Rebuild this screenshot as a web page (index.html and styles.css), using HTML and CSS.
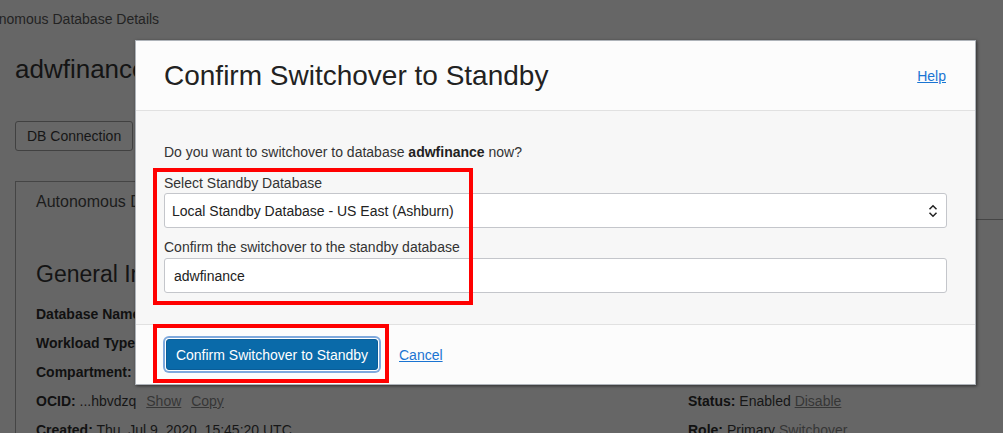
FILE: index.html
```html
<!DOCTYPE html>
<html lang="en">
<head>
<meta charset="utf-8">
<title>Confirm Switchover to Standby</title>
<link rel="stylesheet" href="styles.css">
</head>
<body>
<div class="page">
  <div class="crumb">Autonomous Database Details</div>
  <h1 class="dbname">adwfinance</h1>
  <div class="actions">
    <button class="ghost-btn" type="button">DB Connection</button>
    <button class="ghost-btn" type="button">Service Console</button>
  </div>
  <div class="panel">
    <div class="tabbar">
      <div class="tab">Autonomous Database Information</div>
      <div class="tabfill"></div>
    </div>
    <div class="panel-body">
      <h2 class="section">General Information</h2>
      <div class="cols">
        <div class="col">
          <div class="row"><b>Database Name:</b> ADWFINANCE</div>
          <div class="row"><b>Workload Type:</b> Data Warehouse</div>
          <div class="row"><b>Compartment:</b> finance</div>
          <div class="row"><b>OCID:</b> ...hbvdzq <a class="bglink wide" href="#">Show</a> <a class="bglink wide" href="#">Copy</a></div>
          <div class="row"><b>Created:</b> Thu, Jul 9, 2020, 15:45:20 UTC</div>
        </div>
        <div class="col">
          <div class="row"><b>Data Guard</b></div>
          <div class="row"><b>Peer:</b> Local</div>
          <div class="row"><b>Zone:</b> Ashburn</div>
          <div class="row"><b>Status:</b> Enabled <a class="bglink" href="#">Disable</a></div>
          <div class="row"><b>Role:</b> Primary <a class="bglink" href="#">Switchover</a></div>
        </div>
      </div>
    </div>
  </div>
</div>

<div class="modal" role="dialog">
  <div class="modal-head">
    <h2 class="modal-title">Confirm Switchover to Standby</h2>
    <a class="link" href="#">Help</a>
  </div>
  <div class="modal-body">
    <p class="question">Do you want to switchover to database <b>adwfinance</b> now?</p>
    <div class="label">Select Standby Database</div>
    <div class="select">
      <span>Local Standby Database - US East (Ashburn)</span>
      <svg class="chev" width="10" height="14" viewBox="0 0 10 14" aria-hidden="true">
        <path d="M1.5 5.2 L5 1.7 L8.5 5.2" fill="none" stroke="#222" stroke-width="1.5"/>
        <path d="M1.5 8.8 L5 12.3 L8.5 8.8" fill="none" stroke="#222" stroke-width="1.5"/>
      </svg>
    </div>
    <div class="label label-2">Confirm the switchover to the standby database</div>
    <div class="input">adwfinance</div>
  </div>
  <div class="modal-foot">
    <button class="primary" type="button">Confirm Switchover to Standby</button>
    <a class="link cancel" href="#">Cancel</a>
  </div>
  <div class="mark mark-fields"></div>
  <div class="mark mark-button"></div>
</div>
</body>
</html>
```

FILE: styles.css
```css
* { box-sizing: border-box; }

html, body {
  margin: 0;
  padding: 0;
}

body {
  width: 1003px;
  height: 433px;
  overflow: hidden;
  background: #666666;
  font-family: "Liberation Sans", Arial, sans-serif;
  font-size: 14px;
  line-height: 16px;
  color: #161616;
  position: relative;
}

/* ---------- background page (under overlay) ---------- */
.page {
  padding-left: 15px;
  height: 433px;
  overflow: hidden;
}

.crumb {
  padding-top: 11px;
  margin-left: -45px;
  color: #232323;
  white-space: nowrap;
}

.dbname {
  margin: 27px 0 0;
  font-size: 26px;
  line-height: 30px;
  font-weight: normal;
  color: #141414;
}

.actions {
  display: flex;
  gap: 8px;
  margin-top: 37px;
}

.ghost-btn {
  height: 30px;
  padding: 0 11px;
  border: 1px solid #414141;
  border-radius: 3px;
  background: #676767;
  font-family: inherit;
  font-size: 14px;
  color: #161616;
}

.panel {
  margin-top: 30px;
  width: 1100px;
}

.tabbar {
  display: flex;
  height: 39px;
}

.tab {
  width: 330px;
  border: 1px solid #454545;
  border-bottom: none;
  padding: 11px 0 0 20px;
  font-size: 16px;
  line-height: 18px;
  color: #1c1c1c;
  white-space: nowrap;
}

.tabfill {
  flex: 1;
  border-bottom: 1px solid #454545;
}

.panel-body {
  border-left: 1px solid #454545;
  padding: 40px 0 0 20px;
  height: 300px;
}

.section {
  margin: 0;
  font-size: 23px;
  line-height: 28px;
  font-weight: normal;
  color: #141414;
}

.cols {
  display: grid;
  grid-template-columns: 652px 1fr;
  margin-top: 18px;
}

.row {
  margin-bottom: 13px;
  white-space: nowrap;
  color: #161616;
}

.row b { color: #111; }

.bglink {
  color: #363636;
}

.bglink.wide {
  margin-left: 6px;
}

/* ---------- modal ---------- */
.modal {
  position: absolute;
  left: 135px;
  top: 40px;
  width: 841px;
  border: 1px solid #aeb3b9;
  background: #fcfcfc;
  box-shadow: 1px 1px 3px rgba(0, 0, 0, 0.55);
}

.modal-head {
  height: 70px;
  padding: 0 29px 0 28px;
  display: flex;
  align-items: center;
  justify-content: space-between;
  border-bottom: 1px solid #e1e1e1;
  background: #fcfcfc;
}

.modal-title {
  margin: 0;
  font-size: 28px;
  line-height: 32px;
  font-weight: normal;
  color: #222;
}

.link {
  color: #1a74d2;
  text-decoration: underline;
}

.modal-body {
  height: 213px;
  padding: 33px 28px 0;
  background: #f7f7f7;
  color: #333;
}

.question {
  margin: 0;
  line-height: 16px;
}

.question b { color: #222; }

.label {
  margin-top: 15px;
  line-height: 16px;
  color: #333;
}

.label-2 { margin-top: 11px; }

.select,
.input {
  height: 35px;
  border: 1px solid #c4c6cb;
  border-radius: 3px;
  background: #fff;
  display: flex;
  align-items: center;
  color: #222;
}

.select {
  margin-top: 2px;
  padding: 0 8px 0 7px;
  justify-content: space-between;
}

.chev { display: block; }

.input {
  margin-top: 3px;
  padding-left: 9px;
}

.modal-foot {
  height: 60px;
  border-top: 1px solid #e1e1e1;
  background: #fcfcfc;
  display: flex;
  align-items: center;
  padding-left: 30px;
  gap: 21px;
}

.primary {
  height: 31px;
  width: 212px;
  padding: 0;
  border: 1px solid #0a5d98;
  border-radius: 3px;
  background: #0a6aa9;
  color: #fff;
  font-family: inherit;
  font-size: 14px;
  box-shadow: 0 0 0 1px #ffffff, 0 0 0 3px #7fa9dd;
}

/* red annotation boxes */
.mark {
  position: absolute;
  border: 4px solid #ff0000;
  pointer-events: none;
}

.mark-fields {
  left: 17px;
  top: 127px;
  width: 320px;
  height: 137px;
}

.mark-button {
  left: 17px;
  top: 283px;
  width: 236px;
  height: 59px;
}
```
